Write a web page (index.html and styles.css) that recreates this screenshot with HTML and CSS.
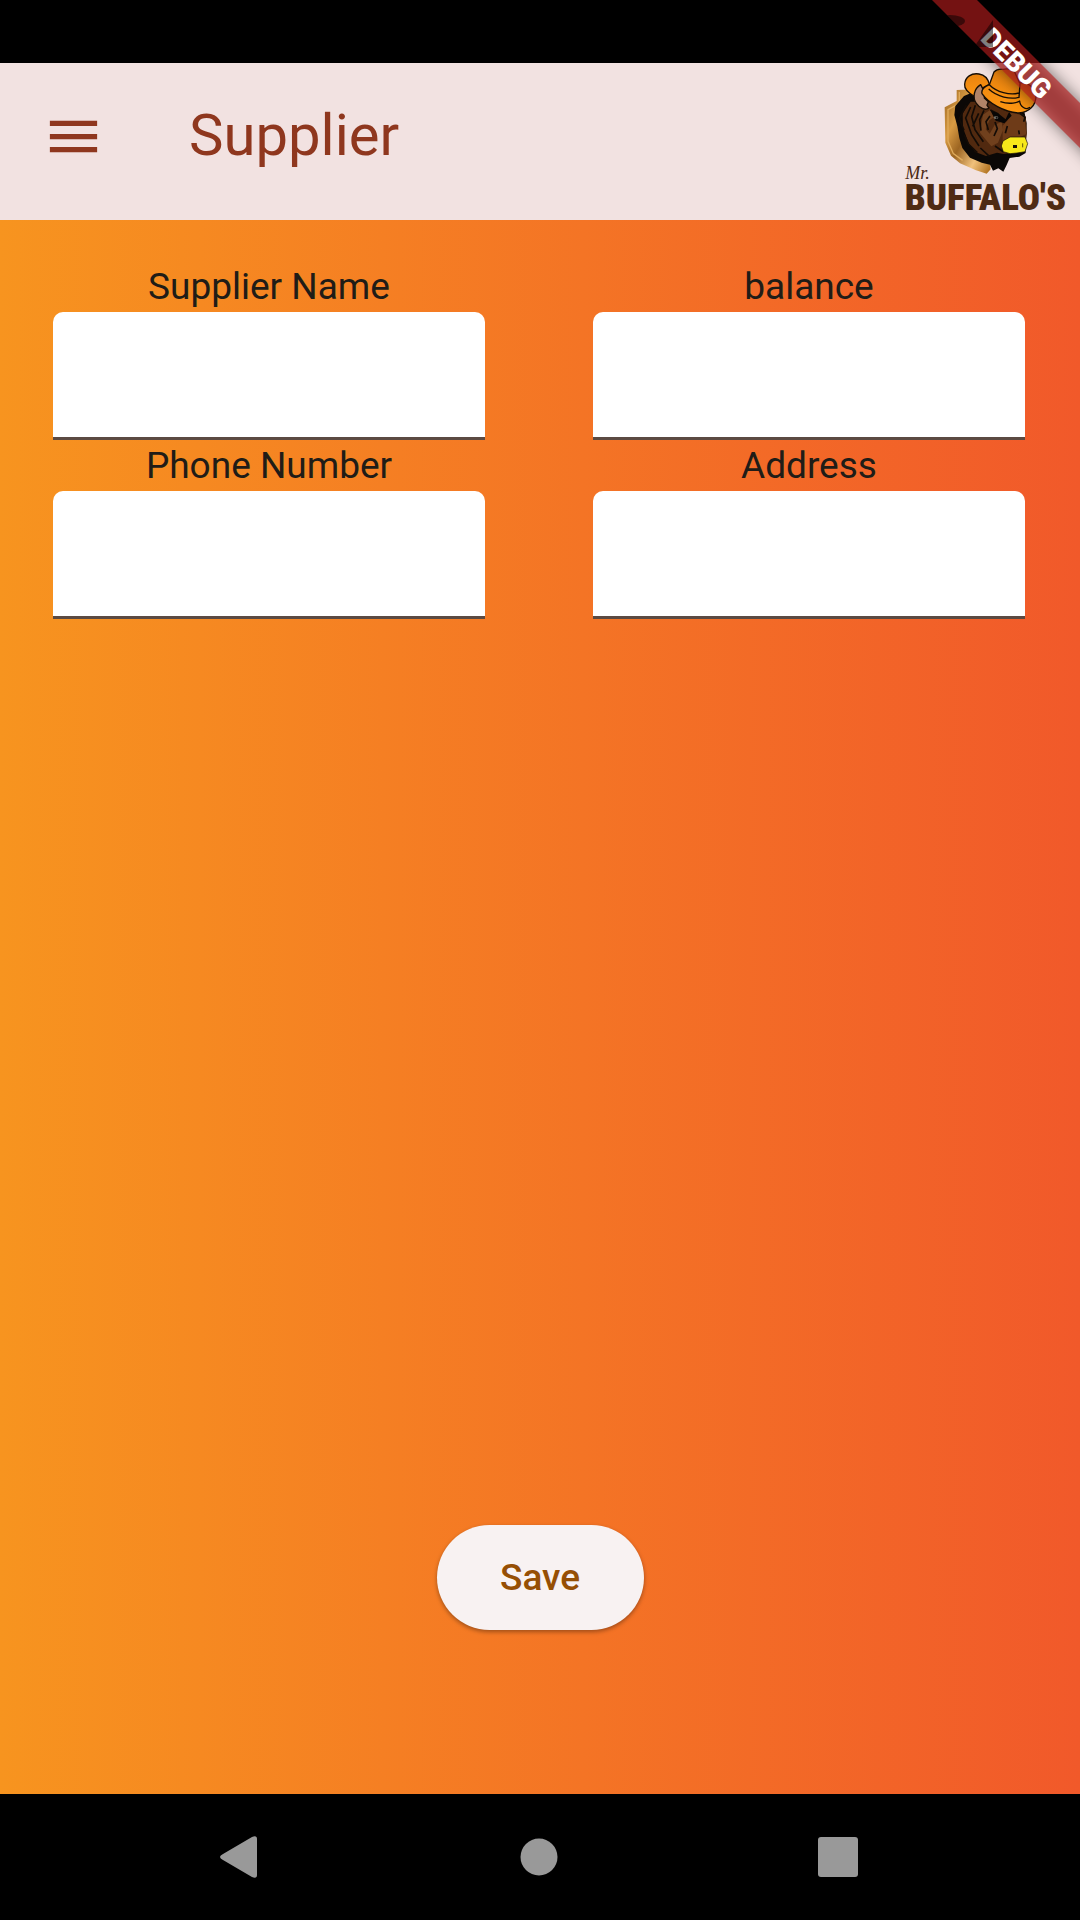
FILE: index.html
```html
<!DOCTYPE html>
<html lang="en">
<head>
<meta charset="utf-8">
<meta name="viewport" content="width=device-width, initial-scale=1">
<title>Supplier</title>
<link rel="stylesheet" href="styles.css">
</head>
<body>
<div class="app">
  <div class="status-bar"></div>
  <header class="app-bar">
    <div class="toolbar">
      <button class="menu-button" type="button" aria-label="Open menu">
        <svg class="menu-icon" viewBox="0 0 24 24" aria-hidden="true"><path d="M3 18h18v-2H3v2zm0-5h18v-2H3v2zm0-7v2h18V6H3z"/></svg>
      </button>
      <h1 class="title">Supplier</h1>
    </div>
    <svg class="logo" viewBox="60 189 540 471" role="img" aria-label="Mr. Buffalo's">
      <defs>
        <linearGradient id="wood" x1="0" y1="0" x2="1" y2="1">
          <stop offset="0" stop-color="#9a6420"/><stop offset=".3" stop-color="#d89b43"/>
          <stop offset=".5" stop-color="#9c6522"/><stop offset=".75" stop-color="#f0c17c"/><stop offset="1" stop-color="#a96813"/>
        </linearGradient>
        <linearGradient id="hat" x1="0" y1="0" x2="0" y2="1">
          <stop offset="0" stop-color="#e8820f"/><stop offset="1" stop-color="#ff9712"/>
        </linearGradient>
      </defs>
      <path fill="url(#wood)" d="M230 270 L285 268 L300 290 L330 490 L332 508 L320 521 L288 511 L240 490 L213 467 L196 428 L194 322 L230 303Z"/>
      <path fill="none" stroke="#e0ab5c" stroke-width="4" d="M238 276 L238 311 L204 329 L204 424 L220 461 L248 481"/>
      <path fill="#0b0806" d="M252 288 L226 318 L223 345 L232 379 L238 414 L247 444 L270 473 L305 488 L330 494 L339 512 L355 505 L370 515 L380 495 L389 474 L418 470 L437 459 L440 370 L428 310 L300 268Z"/>
      <path fill="#51290f" d="M272 305 L248 340 L249 383 L266 430 L286 456 L318 468 L351 458 L371 462 L420 456 L434 442 L441 400 L437 350 L400 322 L320 305Z"/>
      <path fill="#6e3b18" d="M385 335 L433 348 L439 402 L421 411 L385 414 L368 425 L368 377 L382 362Z"/>
      <path fill="#70401d" d="M309 344 L330 330 L342 352 L328 361 L317 388 L329 401 L344 375 L365 365 L369 390 L354 428 L334 439 L318 420 L300 398 L304 373Z"/>
      <path class="fur" d="M259 315 L238 356 L252 391 M272 321 L257 354 L275 404 L297 438 M286 316 L275 350 L285 389 L310 425 M312 331 L299 359 L303 392 M330 348 L318 365 L325 390 M345 366 L352 386 L342 408 M296 340 L278 379 M331 330 L353 341 L365 359 M253 405 L266 433 L292 458 M345 438 L371 456 M301 444 L329 470"/>
      <path fill="#080605" d="M332 332 L354 340 L377 358 L387 335 L395 347 L373 370 L347 362Z"/>
      <ellipse cx="348" cy="353" rx="7" ry="4" fill="#77736a"/><circle cx="350" cy="353" r="3" fill="#111"/>
      <path class="fur" d="M420 340 L435 352 L431 365 M382 378 L376 400 M416 391 L418 403"/>
      <path class="nose" d="M369 423 L390 411 L435 411 L443 431 L435 455 L411 459 L390 461 L370 455 L364 438Z"/>
      <rect x="399" y="435" width="12" height="9" fill="#171007"/><path fill="none" stroke="#171007" stroke-width="2" d="M428 430 v12"/>
      <path class="line" fill="url(#hat)" d="M254 253 C255 231 275 218 297 222 C315 225 324 235 328 253 L304 266 L286 291 C265 279 252 267 254 253Z"/>
      <path class="line" fill="#b18468" d="M302 254 C281 267 277 293 289 310 C300 326 317 332 327 324 L321 316 L325 305 L313 294 L314 277Z"/>
      <path class="line" fill="url(#hat)" d="M328 254 L342 216 Q352 205 369 208 Q388 204 403 214 L419 249 C442 244 462 260 468 287 C468 317 447 337 417 339 C373 337 326 310 306 281 Q302 265 328 254Z"/>
      <path class="line" fill="none" d="M328 254 C350 277 389 286 418 279 L420 252 M326 267 C352 291 391 299 417 292 L418 279 M361 305 C391 315 413 307 419 303 C420 320 438 332 450 322"/>
      <text class="mr" x="76" y="538">Mr.</text>
      <text class="brand" x="74" y="629">BUFFALO'S</text>
    </svg>
  </header>
  <main class="content">
    <form class="supplier-form">
      <div class="fields">
        <div class="field"><label for="name">Supplier Name</label><input id="name" type="text"></div>
        <div class="field"><label for="balance">balance</label><input id="balance" type="text"></div>
        <div class="field"><label for="phone">Phone Number</label><input id="phone" type="tel"></div>
        <div class="field"><label for="address">Address</label><input id="address" type="text"></div>
      </div>
      <button class="save" type="submit">Save</button>
    </form>
  </main>
  <nav class="system-nav" aria-label="System">
    <button class="nav-button" type="button" aria-label="Back"><svg viewBox="0 0 44 44"><path d="M5 19 L34 2 Q39 0 39 4 V40 Q39 44 34 42 L5 25 Q-1 22 5 19Z"/></svg></button>
    <button class="nav-button" type="button" aria-label="Home"><svg viewBox="0 0 44 44"><circle cx="22" cy="22" r="18.5"/></svg></button>
    <button class="nav-button" type="button" aria-label="Recent apps"><svg viewBox="0 0 44 44"><rect x="2" y="2" width="40" height="40" rx="3"/></svg></button>
  </nav>
  <svg class="debug" viewBox="0 0 200 200" aria-label="Debug">
    <defs>
      <clipPath id="strip"><path d="M52 0 H97 L200 103 V148Z"/></clipPath>
      <filter id="soft" x="-20%" y="-20%" width="140%" height="140%"><feGaussianBlur stdDeviation="8"/></filter>
    </defs>
    <path class="debug-shadow" filter="url(#soft)" d="M32 -20 H77 L220 123 V168Z"/>
    <path class="debug-strip" d="M52 0 H97 L200 103 V148Z"/>
    <text class="debug-text" x="0" y="10" transform="translate(137 63) rotate(45)">DEBUG</text>
    <g clip-path="url(#strip)" class="debug-shade"><ellipse cx="70" cy="21" rx="15" ry="6"/><path d="M94 47 L113 20 V47Z"/></g>
  </svg>
</div>
</body>
</html>
```
FILE: styles.css
```css
* { box-sizing: border-box; }

body {
  margin: 0;
  font-family: Roboto, "Liberation Sans", sans-serif;
}

button {
  padding: 0;
  border: 0;
  background: none;
  font: inherit;
}

.app {
  position: relative;
  display: flex;
  flex-direction: column;
  min-height: 100vh;
  overflow: hidden;
  background: #000;
}

.status-bar { height: 63px; }

.app-bar {
  display: flex;
  justify-content: space-between;
  height: 157px;
  background: #f2e2e1;
}

.toolbar {
  display: flex;
  align-items: center;
  gap: 84px;
  height: 147px;
  padding-left: 42px;
  color: #8f371e;
}

.menu-button, .menu-icon {
  display: block;
  width: 63px;
  height: 63px;
  fill: #8f371e;
}

.title {
  margin: 0;
  padding-bottom: 4px;
  font-size: 58px;
  font-weight: 400;
  line-height: 72px;
}

.logo {
  width: 180px;
  height: 157px;
}

.line { stroke: #160d05; stroke-width: 4; stroke-linejoin: round; }
.fur { fill: none; stroke: #120b06; stroke-width: 5; }
.nose { fill: #f7e81a; stroke: #160d05; stroke-width: 2; }

.mr {
  font: italic 54px "Liberation Serif", serif;
  fill: #4a2812;
}

.brand {
  font: 900 111px "Roboto Condensed", "Liberation Sans Narrow", Roboto, sans-serif;
  fill: #4f2b14;
}

.content {
  display: flex;
  flex: 1;
  background: linear-gradient(90deg, #f7941f, #f47425 54%, #f1592a);
}

.supplier-form {
  display: flex;
  flex: 1;
  flex-direction: column;
  align-items: center;
  justify-content: space-between;
  padding: 41px 53px 164px;
}

.fields {
  display: grid;
  grid-template-columns: 1fr 1fr;
  column-gap: 108px;
  width: 100%;
  padding-right: 2px;
}

.field {
  display: flex;
  flex-direction: column;
}

.field label {
  font-size: 37px;
  line-height: 51px;
  text-align: center;
  color: #201c17;
}

.field input {
  width: 100%;
  height: 128px;
  padding: 0 32px;
  border: 0;
  border-bottom: 3px solid #5b4a42;
  border-radius: 10px 10px 0 0;
  background: #fff;
  font: inherit;
  font-size: 42px;
}

.save {
  width: 207px;
  height: 105px;
  border-radius: 53px;
  background: #f8f2f2;
  box-shadow: 0 2px 4px rgba(0, 0, 0, 0.35);
  color: #964f04;
  font-size: 37px;
  font-weight: 500;
}

.system-nav {
  display: flex;
  align-items: center;
  justify-content: space-between;
  height: 126px;
  padding: 0 220px 0 218px;
}

.nav-button, .nav-button svg {
  display: block;
  width: 44px;
  height: 44px;
  fill: #999;
}

.debug {
  position: absolute;
  top: 0;
  right: 0;
  width: 200px;
  height: 200px;
  pointer-events: none;
}

.debug-shadow { opacity: 0.5; }
.debug-strip { fill: #b71c1c; opacity: 0.63; }
.debug-shade { opacity: 0.5; }

.debug-text {
  font-size: 27px;
  font-weight: 900;
  text-anchor: middle;
  fill: #fff;
}
```
